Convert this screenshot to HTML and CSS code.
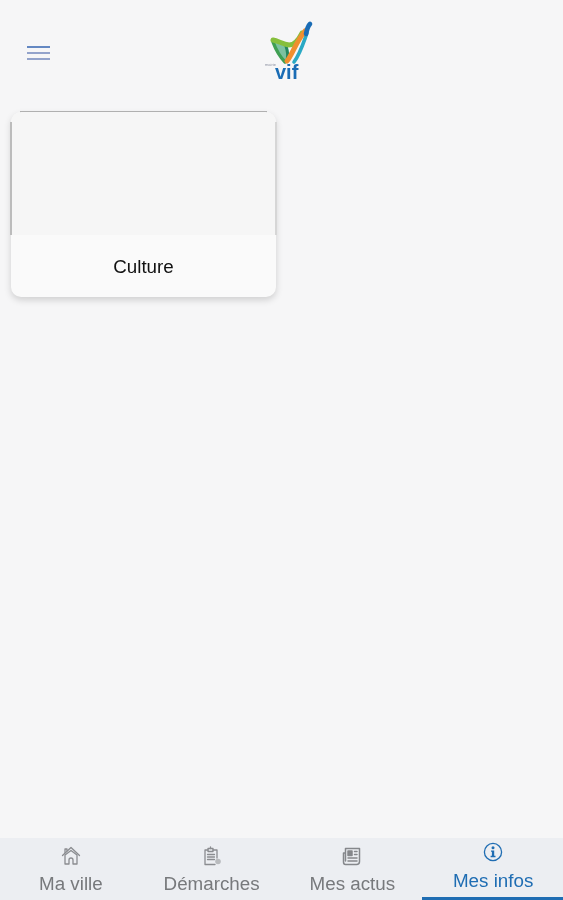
FILE: index.html
```html
<!DOCTYPE html>
<html lang="fr">
<head>
<meta charset="utf-8">
<title>Mes infos</title>
<link rel="stylesheet" href="styles.css">
</head>
<body>
<div class="app">
  <header class="topbar">
    <button class="menu" aria-label="Menu"><span></span><span></span><span></span></button>
    <svg class="logo" width="50" height="66" viewBox="0 0 50 66" aria-label="Vif">
      <path d="M8 23 C11 31 15 38 20 43 L24 43 C24 36 23 32 20 27 Z" fill="#7cc1a0"/>
      <path d="M8 23 C11 31 15 38 20 43" fill="none" stroke="#3f9f52" stroke-width="3.4" stroke-linecap="round"/>
      <path d="M21 27 C23 33 23 38 22 42" fill="none" stroke="#23875f" stroke-width="3" stroke-linecap="round"/>
      <path d="M8 21 C13 22 18 25 24 26 C29 26 33 22 37 14" fill="none" stroke="#86bf3c" stroke-width="5" stroke-linecap="round"/>
      <path d="M29 43 C35 35 38 25 42 14" fill="none" stroke="#2aa9c4" stroke-width="3.6" stroke-linecap="round"/>
      <path d="M22 42 C27 36 31 23 40 12" fill="none" stroke="#ef8f2f" stroke-width="5" stroke-linecap="round"/>
      <path d="M41 15 C42 10 43 7 45 5" fill="none" stroke="#1a6cb5" stroke-width="4.6" stroke-linecap="round"/>
      <text class="logo-small" x="0" y="47">mairie</text>
      <text class="logo-vif" x="10" y="60">vif</text>
    </svg>
  </header>

  <main class="content">
    <article class="card">
      <div class="card-media"></div>
      <div class="card-label"><span>Culture</span></div>
    </article>
  </main>

  <nav class="tabs">
    <a class="tab">
      <svg class="icon" width="20" height="20" viewBox="0 0 20 20" fill="none" stroke="#8a8c90" stroke-width="1.3" stroke-linejoin="round" stroke-linecap="round">
        <path d="M1.5 9.5 L10 1.5 L18.5 9.5"/>
        <path d="M4 6.5 L4 3 L6 3 L6 4.8"/>
        <path d="M4 9 L4 18 L8 18 L8 14 A2 2 0 0 1 12 14 L12 18 L16 18 L16 9 L10 4.5 Z"/>
      </svg>
      <span>Ma ville</span>
    </a>
    <a class="tab">
      <svg class="icon" width="20" height="20" viewBox="0 0 20 20" fill="none" stroke="#8a8c90" stroke-width="1.3" stroke-linejoin="round" stroke-linecap="round">
        <path d="M6 4 L3 4 L3 18.5 L13 18.5"/>
        <path d="M11 4 L15 4 L15 12"/>
        <rect x="6" y="2.5" width="5" height="3"/>
        <path d="M8.5 1 L8.5 2.5"/>
        <path d="M5.5 8.5 L12.5 8.5 M5.5 11 L12.5 11 M5.5 13.5 L12.5 13.5"/>
        <circle cx="16" cy="15.5" r="2.8" fill="#b9bbbe" stroke="none"/>
      </svg>
      <span>Démarches</span>
    </a>
    <a class="tab">
      <svg class="icon" width="20" height="20" viewBox="0 0 20 20" fill="none" stroke="#85878b" stroke-width="1.5" stroke-linejoin="round" stroke-linecap="round">
        <path d="M3.5 15 L3.5 2.5 L17.5 2.5 L17.5 15.5 Q17.5 18.5 14.5 18.5 L3.5 18.5 Q1.5 18.5 1.5 16 L1.5 7 L3.5 7"/>
        <rect x="6" y="5" width="4" height="4.5" fill="#85878b"/>
        <path d="M12.5 5.5 L15 5.5 M12.5 8.5 L15 8.5 M6 12 L15 12 M6 15 L15 15"/>
      </svg>
      <span>Mes actus</span>
    </a>
    <a class="tab tab-active">
      <svg class="icon" width="20" height="20" viewBox="0 0 20 20" fill="none">
        <circle cx="10" cy="10" r="8.6" stroke="#1f6db3" stroke-width="1.3"/>
        <circle cx="10" cy="5.8" r="1.5" fill="#1f6db3"/>
        <path d="M8 8.5 L11.2 8.5 L11.2 13.8 L12.5 13.8 L12.5 15.2 L7.6 15.2 L7.6 13.8 L8.9 13.8 L8.9 9.8 L8 9.8 Z" fill="#1f6db3"/>
      </svg>
      <span>Mes infos</span>
    </a>
  </nav>
</div>
</body>
</html>
```
FILE: styles.css
```css
* { box-sizing: border-box; }
html, body { margin: 0; height: 100%; }
body {
  background: #f6f6f7;
  font-family: "Liberation Sans", Arial, sans-serif;
  overflow: hidden;
}
.app {
  display: flex;
  flex-direction: column;
  height: 900px;
}
.topbar {
  flex: 0 0 112px;
  position: relative;
  display: flex;
  align-items: flex-start;
  padding: 46px 0 0 27px;
}
.menu {
  display: flex;
  flex-direction: column;
  gap: 4px;
  width: 23px;
  padding: 0;
  border: 0;
  background: none;
  filter: blur(.5px);
}
.menu span {
  display: block;
  height: 2px;
  background: #93a3cb;
}
.menu span:first-child { background: #6488c2; }
.logo {
  position: absolute;
  left: 265px;
  top: 19px;
  filter: blur(.7px);
}
.logo-small {
  font: 4px "Liberation Sans", Arial, sans-serif;
  fill: #8a8fa0;
}
.logo-vif {
  font: bold 20px "Liberation Sans", Arial, sans-serif;
  fill: #1a6cb5;
}
.content {
  flex: 1;
  padding: 0 0 0 11px;
}
.card {
  width: 265px;
  height: 185px;
  border-radius: 10px;
  background: #fafafa;
  box-shadow: 0 3px 7px rgba(0, 0, 0, .16);
  display: flex;
  flex-direction: column;
  position: relative;
}
.card::before {
  content: "";
  position: absolute;
  left: 9px;
  right: 9px;
  top: -1px;
  height: 2px;
  background: #b0b0b0;
  filter: blur(.4px);
}
.card-media {
  height: 123px;
  background: #f6f6f6;
  border-radius: 10px 10px 0 0;
  position: relative;
}
.card-media::before,
.card-media::after {
  content: "";
  position: absolute;
  top: 10px;
  bottom: 0;
  width: 2px;
  filter: blur(.4px);
}
.card-media::before { left: -1px; background: #bcbcbc; }
.card-media::after { right: -1px; background: #d6d6d6; }
.card-label {
  flex: 1;
  display: flex;
  align-items: center;
  justify-content: center;
  padding-top: 2px;
  font-size: 18.8px;
  color: #111;
}
.card-label span { filter: blur(.35px); }
.tabs {
  flex: 0 0 62px;
  display: grid;
  grid-template-columns: repeat(4, 1fr);
  background: #eceef2;
}
.tab {
  display: flex;
  flex-direction: column;
  align-items: center;
  padding: 8px 0 0 1px;
  gap: 7px;
  font-size: 18.8px;
  line-height: 21px;
  color: #77797c;
}
.tab span, .icon { filter: blur(.4px); }
.tab-active {
  padding-top: 4px;
  gap: 8px;
  color: #1f6db3;
  border-bottom: 3px solid #1f6db3;
}
```
